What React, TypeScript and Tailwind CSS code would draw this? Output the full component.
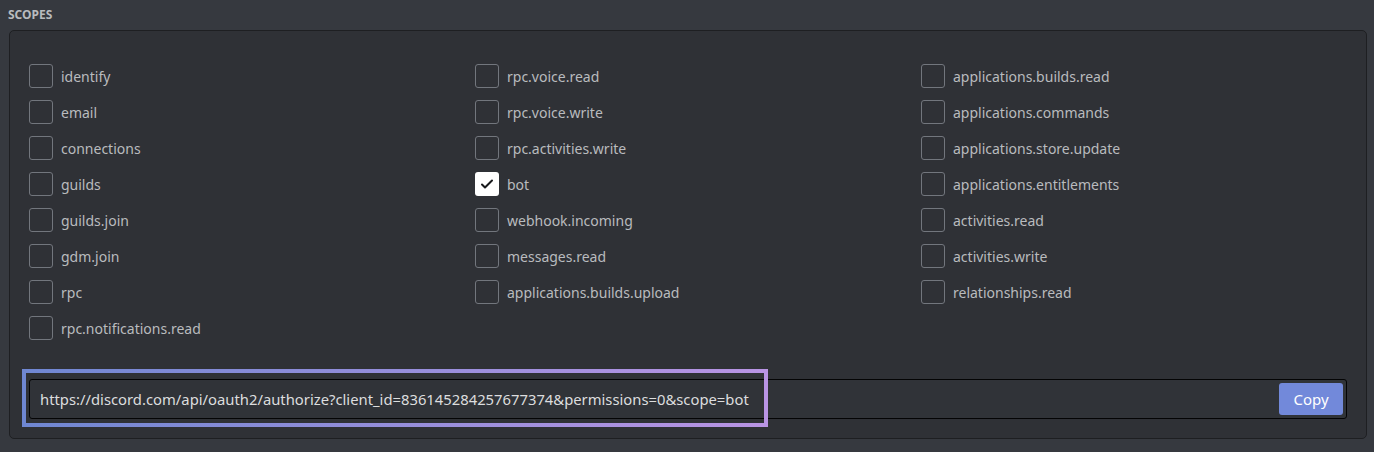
const col1 = ["identify", "email", "connections", "guilds", "guilds.join", "gdm.join", "rpc", "rpc.notifications.read"];
const col2 = ["rpc.voice.read", "rpc.voice.write", "rpc.activities.write", "bot", "webhook.incoming", "messages.read", "applications.builds.upload"];
const col3 = [
  "applications.builds.read",
  "applications.commands",
  "applications.store.update",
  "applications.entitlements",
  "activities.read",
  "activities.write",
  "relationships.read",
];

const url = "https://discord.com/api/oauth2/authorize?client_id=836145284257677374&permissions=0&scope=bot";

function Scope({ name }: { name: string }) {
  const checked = name === "bot";
  return (
    <label className="flex h-9 items-center gap-2">
      {checked ? (
        <span className="flex h-6 w-6 items-center justify-center rounded-[3px] bg-white">
          <svg width="16" height="16" viewBox="0 0 16 16" fill="none">
            <path d="M3 8.5l3 3 7-7" stroke="#18191c" strokeWidth="2" strokeLinecap="round" strokeLinejoin="round" />
          </svg>
        </span>
      ) : (
        <span className="h-6 w-6 rounded-[3px] border border-[#72767d]" />
      )}
      <span className="text-[14px] text-[#b9bbbe]">{name}</span>
    </label>
  );
}

export default function App() {
  return (
    <div className="min-h-[452px] bg-[#36393f] pt-[7px] pb-3" style={{ fontFamily: '"Noto Sans", "Open Sans", sans-serif' }}>
      <h2 className="ml-2 mb-[7px] text-[12px] font-bold uppercase leading-4 text-[#b9bbbe]">Scopes</h2>
      <div className="ml-[9px] mr-[7px] rounded-[5px] border border-[#1e1f22] bg-[#2f3136] px-[19px] pt-[27px] pb-[19px]">
        <div className="grid grid-cols-[446px_446px_1fr]">
          {[col1, col2, col3].map((col, i) => (
            <div key={i} className="flex flex-col">
              {col.map((s) => (
                <Scope key={s} name={s} />
              ))}
            </div>
          ))}
        </div>
        <div className="relative mt-[33px]">
          <div className="flex h-10 items-center justify-between rounded-[3px] border border-[#040405] bg-[#303338] pl-[10px] pr-[3px]">
            <span className="text-[14.8px] text-[#dcddde]">{url}</span>
            <button className="h-8 w-16 rounded-[3px] bg-[#7289da] text-[15px] text-white">Copy</button>
          </div>
          {/* highlight frame drawn over the link */}
          <div className="pointer-events-none absolute -top-[10px] -left-[7px] h-[58px] w-[746px]">
            <div className="absolute inset-x-0 top-0 h-1 rounded-t-[2px] bg-gradient-to-r from-[#6f87d2] to-[#b994e4]" />
            <div className="absolute inset-x-0 bottom-0 h-1 rounded-b-[2px] bg-gradient-to-r from-[#6f87d2] to-[#b994e4]" />
            <div className="absolute inset-y-0 left-0 w-1 bg-[#6f87d2]" />
            <div className="absolute inset-y-0 right-0 w-1 bg-[#b994e4]" />
          </div>
        </div>
      </div>
    </div>
  );
}
